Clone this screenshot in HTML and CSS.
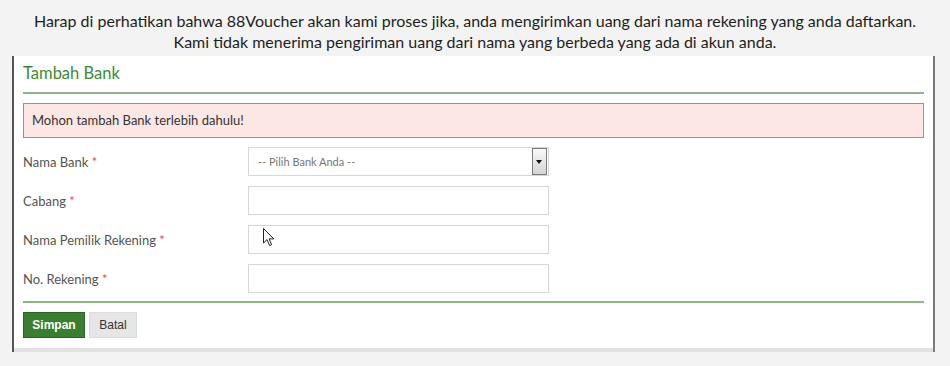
FILE: index.html
```html
<!DOCTYPE html>
<html lang="id">
<head>
    <meta charset="UTF-8">
    <meta name="viewport" content="width=device-width, initial-scale=1.0">
    <title>Tambah Bank</title>
    <link rel="stylesheet" href="styles.css">
</head>
<body>
<!-- Pemberitahuan -->
<p class="notice">
    Harap di perhatikan bahwa 88Voucher akan kami proses jika, anda mengirimkan uang dari nama rekening yang anda daftarkan.<br>
    Kami tidak menerima pengiriman uang dari nama yang berbeda yang ada di akun anda.
</p>

<div class="panel">
    <div class="panel-body">
        <h2>Tambah Bank</h2>
        <div class="alert">Mohon tambah Bank terlebih dahulu!</div>

        <form id="bankForm">
            <div class="row">
                <label for="bank">Nama Bank <span class="req">*</span></label>
                <div class="select-wrap">
                    <select id="bank">
                        <option>-- Pilih Bank Anda --</option>
                    </select>
                    <span class="select-btn"></span>
                </div>
            </div>
            <div class="row">
                <label for="cabang">Cabang <span class="req">*</span></label>
                <input type="text" id="cabang">
            </div>
            <div class="row">
                <label for="pemilik">Nama Pemilik Rekening <span class="req">*</span></label>
                <div class="input-wrap">
                    <input type="text" id="pemilik">
                    <!-- kursor mouse -->
                    <svg class="cursor" width="12" height="19" viewBox="0 0 12 19">
                        <path d="M0.5 0.5 L0.5 15 L4 11.6 L6.6 17.6 L8.6 16.7 L6.1 10.9 L10.8 10.9 Z" fill="#fff" stroke="#222" stroke-width="1" stroke-linejoin="round"/>
                    </svg>
                </div>
            </div>
            <div class="row">
                <label for="rekening">No. Rekening <span class="req">*</span></label>
                <input type="text" id="rekening">
            </div>

            <div class="actions">
                <button type="submit" class="btn-save">Simpan</button>
                <button type="button" class="btn-cancel">Batal</button>
            </div>
        </form>
    </div>
</div>
</body>
</html>
```

FILE: styles.css
```css
/* Umum */
body {
    margin: 0;
    background: #f3f3f3;
    font-family: 'Lato', sans-serif;
    color: #222;
}

.notice {
    margin: 0;
    padding-top: 10px;
    text-align: center;
    font-size: 16px;
    line-height: 21px;
    color: #1e1e1e;
}

/* Panel */
.panel {
    margin: 4px 15px 0 12px;
    border-left: 2px solid #555;
    border-right: 2px solid #7a7a7a;
    background: #fff;
}

.panel-body {
    padding: 7px 9px 10px 9px;
    border-bottom: 4px solid #e2e2e2;
}

h2 {
    margin: 0;
    font-size: 16.5px;
    font-weight: normal;
    line-height: 20px;
    color: #3d8a34;
    padding-bottom: 9px;
    border-bottom: 2px solid #8fb489;
}

.alert {
    margin-top: 9px;
    height: 33px;
    line-height: 33px;
    padding: 0 8px;
    background: #fde7e5;
    border: 1px solid #e2765f;
    font-size: 13px;
    color: #333;
}

/* Form */
form {
    margin-top: 9px;
}

.row {
    display: flex;
    align-items: center;
    height: 29px;
    margin-bottom: 10px;
}

.row label {
    width: 225px;
    font-size: 13px;
    color: #555;
}

.req {
    color: #d9534f;
}

input, select {
    box-sizing: border-box;
    width: 301px;
    height: 29px;
    border: 1px solid #d6d6d6;
    background: #fff;
    font-family: 'Lato', sans-serif;
    font-size: 11px;
    padding: 0 9px;
    margin: 0;
}

select {
    appearance: none;
    color: #777;
}

.select-wrap, .input-wrap {
    position: relative;
}

.select-btn {
    position: absolute;
    top: 1px;
    right: 2px;
    width: 13px;
    height: 25px;
    border: 1px solid #7b7b7b;
    background: linear-gradient(#fafafa, #d4d4d4);
}

.select-btn::after {
    content: '';
    position: absolute;
    left: 3px;
    top: 11px;
    border-left: 3px solid transparent;
    border-right: 3px solid transparent;
    border-top: 4px solid #111;
}

.cursor {
    position: absolute;
    left: 15px;
    top: 3px;
}

/* Tombol */
.actions {
    margin-top: -2px;
    padding-top: 9px;
    border-top: 2px solid #8fb489;
    display: flex;
    gap: 4px;
}

.actions button {
    height: 26px;
    font-family: 'Liberation Sans', Arial, sans-serif;
    font-size: 12px;
    cursor: pointer;
}

.btn-save {
    width: 62px;
    background: #3a7f31;
    border: 1px solid #2d6426;
    color: #fff;
    font-weight: bold;
}

.btn-cancel {
    width: 48px;
    background: #e6e6e6;
    border: 1px solid #dcdcdc;
    color: #333;
}
```
